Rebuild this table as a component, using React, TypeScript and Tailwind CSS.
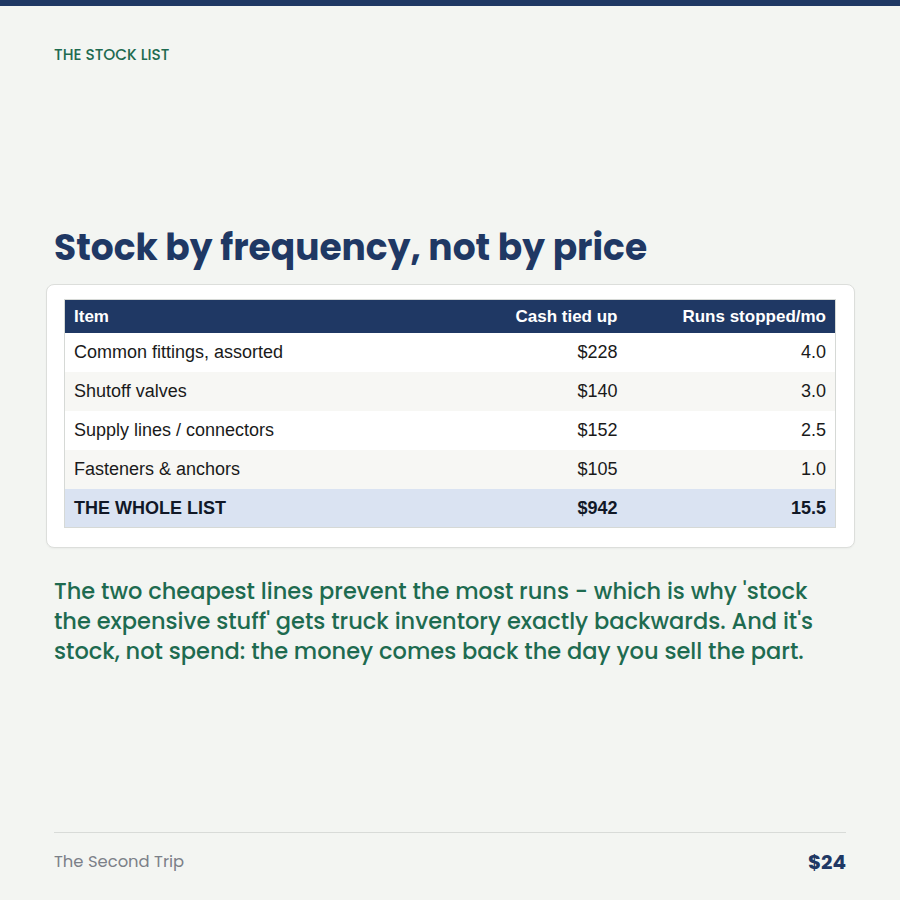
const rows = [
  { item: "Common fittings, assorted", cash: "$228", runs: "4.0" },
  { item: "Shutoff valves", cash: "$140", runs: "3.0" },
  { item: "Supply lines / connectors", cash: "$152", runs: "2.5" },
  { item: "Fasteners & anchors", cash: "$105", runs: "1.0" },
];

const display = { fontFamily: 'Poppins, "Noto Sans", sans-serif' };
const table = { fontFamily: '"Liberation Sans", Arial, sans-serif' };

export default function App() {
  return (
    <div className="w-[900px] h-[900px] bg-[#f3f5f2] flex flex-col border-t-[6px] border-[#1f3864]" style={display}>
      <div className="px-[54px] pt-[38px] text-[15.3px] font-medium text-[#1e6b50] uppercase">The Stock List</div>

      <h1 className="mt-[159px] px-[54px] text-[36px] leading-[44px] font-bold text-[#1f3864]">
        Stock by frequency, not by price
      </h1>

      <div className="ml-[46px] w-[809px] mt-[14px] bg-white border border-[#dcdedb] rounded-lg pl-[17px] pr-[18px] pt-[14px] pb-[19px] shadow-[0_1px_2px_rgba(0,0,0,0.04)]">
        <table className="w-full border-collapse border border-[#d6d9d6]" style={table}>
          <thead>
            <tr className="bg-[#1f3864] text-white text-[17px] font-bold h-[34px]">
              <th className="text-left px-[9px]">Item</th>
              <th className="text-right px-[9px]">Cash tied up</th>
              <th className="text-right px-[9px] w-[209px]">Runs stopped/mo</th>
            </tr>
          </thead>
          <tbody className="text-[18px] text-[#1a1a1a]">
            {rows.map((r, i) => (
              <tr key={r.item} className={`h-[39px] ${i % 2 ? "bg-[#f7f7f4]" : "bg-white"}`}>
                <td className="px-[9px]">{r.item}</td>
                <td className="px-[9px] text-right">{r.cash}</td>
                <td className="px-[9px] text-right">{r.runs}</td>
              </tr>
            ))}
            <tr className="h-[38px] bg-[#dae3f2] font-bold text-[#111827]">
              <td className="px-[9px]">THE WHOLE LIST</td>
              <td className="px-[9px] text-right">$942</td>
              <td className="px-[9px] text-right">15.5</td>
            </tr>
          </tbody>
        </table>
      </div>

      <p className="mt-[28px] pl-[54px] w-[846px] text-[22.5px] leading-[30px] font-medium text-[#1e6b50]">
        The two cheapest lines prevent the most runs - which is why 'stock the expensive stuff' gets truck inventory
        exactly backwards. And it's stock, not spend: the money comes back the day you sell the part.
      </p>

      <div className="mt-auto mx-[54px] mb-[23px] border-t border-[#d8dbd8] pt-[14px] flex items-center justify-between">
        <span className="text-[16.4px] text-[#7b8088]">The Second Trip</span>
        <span className="text-[20px] font-bold text-[#1f3864]">$24</span>
      </div>
    </div>
  );
}
